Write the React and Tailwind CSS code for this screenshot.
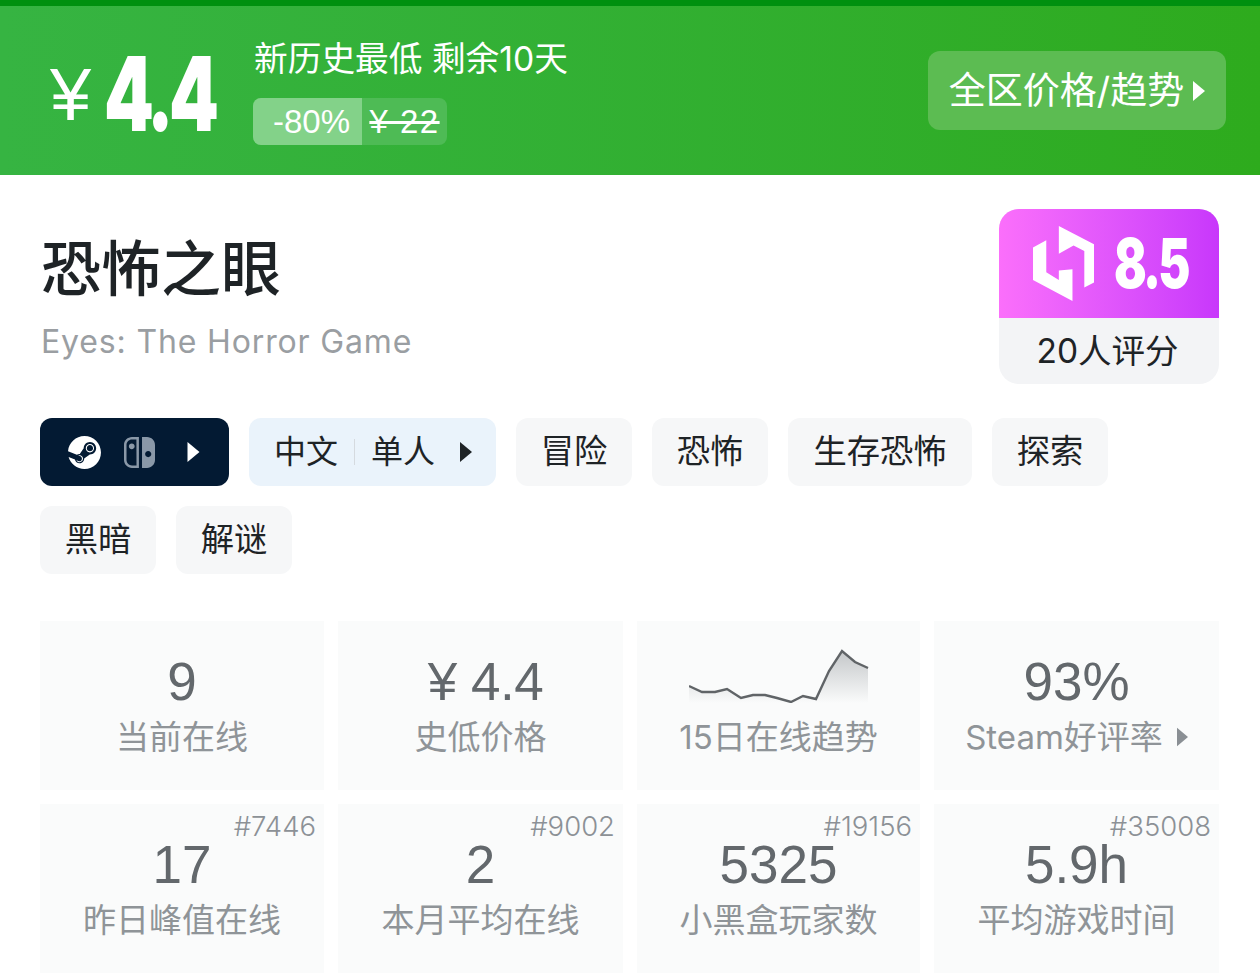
import { SiSteam, SiNintendoswitch } from "react-icons/si";

const cjk = { fontFamily: '"Inter","Noto Sans CJK SC",sans-serif' };
const lib = { fontFamily: '"Liberation Sans","Noto Sans CJK SC",sans-serif' };

function Tri({ className }) {
  return (
    <svg viewBox="0 0 12 20" className={className} fill="currentColor">
      <path d="M0 0 L12 10 L0 20 Z" />
    </svg>
  );
}

function Logo() {
  return (
    <svg viewBox="25 18 170 222" className="w-[61px] h-[75px] shrink-0" preserveAspectRatio="none" fill="#fff">
      <path d="M97 18 L195 72 V185 L168 200 V92 L138 76 L97 100 Z" />
      <path d="M25 82 L62 60 V155 L97 178 V150 L135 146 V240 L25 178 Z" />
    </svg>
  );
}

function Tag({ children, wide }) {
  return (
    <div className={`h-[68px] rounded-[12px] bg-[#f6f7f8] flex items-center justify-center text-[33.3px] text-[#1e2326] ${wide ? "w-[184px]" : "w-[116px]"}`}>
      {children}
    </div>
  );
}

function Stat({ value, label, rank, arrow, chart }) {
  return (
    <div className="relative h-[169px] bg-[#fafbfb] flex flex-col items-center">
      {rank && (
        <div className="absolute top-[4px] right-[8px] text-[27.5px] leading-[36px] text-[#8c9196] font-light">{rank}</div>
      )}
      <div className="h-[34px] shrink-0" />
      {chart ? (
        <svg viewBox="0 0 180 56" className="w-[180px] h-[56px] mt-[-8px] mb-[6px]">
          <defs>
            <linearGradient id="trend" x1="0" y1="0" x2="0" y2="1">
              <stop offset="0" stopColor="#c4c7c9" />
              <stop offset="1" stopColor="#fafbfb" />
            </linearGradient>
          </defs>
          <path fill="url(#trend)" d="M0 39 L13 45 L26 45 L38 42 L52 51 L64 48 L76 48 L88 51 L102 55 L114 49 L127 52 L140 24 L153 4 L166 15 L179 21 L179 56 L0 56 Z" />
          <path fill="none" stroke="#606467" strokeWidth="2.4" d="M0 39 L13 45 L26 45 L38 42 L52 51 L64 48 L76 48 L88 51 L102 55 L114 49 L127 52 L140 24 L153 4 L166 15 L179 21" />
        </svg>
      ) : (
        <div className="text-[53px] leading-[54px] text-[#63686c] whitespace-nowrap" style={lib}>{value}</div>
      )}
      <div className="mt-[5px] text-[33px] leading-[46px] text-[#8f9498] flex items-center whitespace-nowrap">
        {label}
        {arrow && <Tri className="w-[11px] h-[20px] ml-[14px] text-[#8a8f94]" />}
      </div>
    </div>
  );
}

export default function App() {
  return (
    <div className="w-[1260px] h-[974px] overflow-hidden bg-white" style={cjk}>
      <div className="h-[6px] bg-[#00900f]" />
      <div className="h-[169px] bg-gradient-to-r from-[#36b442] to-[#2eab1d] flex items-center justify-between pl-[50px] pr-[34px]">
        <div className="flex items-center">
          <div className="flex items-center w-[203px] text-white">
            <span className="text-[74px] leading-none mt-[8px]" style={lib}>¥</span>
            <span className="ml-[13px] text-[103px] leading-none font-black origin-left scale-x-[0.69] tracking-[-6.5px] mt-[6px]">
              4.4
            </span>
          </div>
          <div className="flex flex-col translate-y-[1px]">
            <div className="text-[33.7px] leading-[46px] text-white mt-[-2px] pl-[1px] whitespace-nowrap">新历史最低 剩余10天</div>
            <div className="mt-[16px] w-[194px] h-[47px] rounded-[8px] bg-[#4ebb55] flex overflow-hidden text-white text-[33px]" style={lib}>
              <div className="w-[109px] bg-[#83d289] flex items-center justify-center pl-[8px]">-80%</div>
              <div className="flex-1 flex items-center justify-center line-through whitespace-nowrap tracking-[1.5px]">¥ 22</div>
            </div>
          </div>
        </div>
        <div className="w-[298px] h-[79px] rounded-[12px] bg-[#5cbc52] flex items-center justify-center text-white text-[37px]">
          全区价格/趋势
          <Tri className="w-[12px] h-[22px] ml-[9px]" />
        </div>
      </div>

      <div className="flex justify-between pl-[41px] pr-[41px] pt-[34px]">
        <div className="pt-[18px]">
          <div className="text-[60px] leading-[84px] font-medium text-[#1e2326]">恐怖之眼</div>
          <div className="mt-[8px] text-[32px] leading-[46px] text-[#9a9ea2] tracking-[0.85px]">Eyes: The Horror Game</div>
        </div>
        <div className="w-[220px] h-[175px] rounded-[20px] overflow-hidden bg-[#f3f4f6]">
          <div className="h-[109px] bg-gradient-to-r from-[#fb6ffb] to-[#c837fb] flex items-center pl-[34px]">
            <Logo />
            <span className="ml-[20px] text-[69px] font-black text-white leading-none origin-left scale-x-[0.7] tracking-[-4px]">
              8.5
            </span>
          </div>
          <div className="h-[66px] flex items-center justify-center text-[33.5px] text-[#1e2326] pr-[3px]">20人评分</div>
        </div>
      </div>

      <div className="pl-[40px] pr-[40px] mt-[34px] flex flex-wrap gap-[20px]">
        <div className="w-[189px] h-[68px] rounded-[12px] bg-[#031a33] flex items-center pl-[28px]">
          <SiSteam className="w-[33px] h-[33px] text-white" />
          <SiNintendoswitch className="w-[31px] h-[31px] ml-[23px] text-[#8a98a8]" />
          <Tri className="w-[13px] h-[20px] ml-[32px] text-white" />
        </div>
        <div className="w-[247px] h-[68px] rounded-[12px] bg-[#eaf3fb] flex items-center pl-[25px] text-[32px] text-[#1e2326]">
          中文
          <div className="w-[1px] h-[26px] bg-[#d5dadf] mx-[16px]" />
          单人
          <Tri className="w-[12px] h-[20px] ml-[25px]" />
        </div>
        <Tag>冒险</Tag>
        <Tag>恐怖</Tag>
        <Tag wide>生存恐怖</Tag>
        <Tag>探索</Tag>
        <Tag>黑暗</Tag>
        <Tag>解谜</Tag>
      </div>

      <div className="pl-[40px] mt-[47px] grid grid-cols-[284px_285px_283px_285px] gap-[14px]">
        <Stat value="9" label="当前在线" />
        <Stat value={<span className="ml-[10px] tracking-[-0.5px]">¥ 4.4</span>} label="史低价格" />
        <Stat chart label="15日在线趋势" />
        <Stat value="93%" label="Steam好评率" arrow />
        <Stat value="17" label="昨日峰值在线" rank="#7446" />
        <Stat value="2" label="本月平均在线" rank="#9002" />
        <Stat value="5325" label="小黑盒玩家数" rank="#19156" />
        <Stat value="5.9h" label="平均游戏时间" rank="#35008" />
      </div>
    </div>
  );
}
